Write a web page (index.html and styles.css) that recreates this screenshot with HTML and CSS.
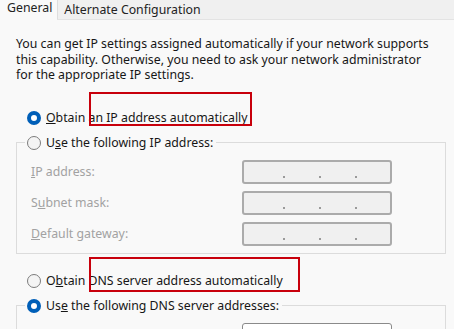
FILE: index.html
```html
<!DOCTYPE html>
<html lang="en">
<head>
    <meta charset="UTF-8">
    <meta name="viewport" content="width=device-width, initial-scale=1.0">
    <title>Internet Protocol Version 4 (TCP/IPv4) Properties</title>
    <link rel="stylesheet" href="styles.css">
</head>
<body>

    <div class="window">
        <!-- Zakladki -->
        <div class="tabs">
            <div class="tab tab-active">General</div>
            <div class="tab">Alternate Configuration</div>
        </div>

        <div class="panel">
            <p class="intro">You can get IP settings assigned automatically if your network supports<br>this capability. Otherwise, you need to ask your network administrator<br>for the appropriate IP settings.</p>

            <div class="radio-row">
                <span class="radio radio-on"></span>
                <span><u>O</u>btain an IP address automatically</span>
            </div>

            <fieldset class="group">
                <legend>
                    <span class="radio-row">
                        <span class="radio"></span>
                        <span>U<u>s</u>e the following IP address:</span>
                    </span>
                </legend>
                <div class="field-row">
                    <span class="field-label"><u>I</u>P address:</span>
                    <div class="ip-box"><span class="dot"></span><span class="dot"></span><span class="dot"></span></div>
                </div>
                <div class="field-row">
                    <span class="field-label">S<u>u</u>bnet mask:</span>
                    <div class="ip-box"><span class="dot"></span><span class="dot"></span><span class="dot"></span></div>
                </div>
                <div class="field-row">
                    <span class="field-label"><u>D</u>efault gateway:</span>
                    <div class="ip-box"><span class="dot"></span><span class="dot"></span><span class="dot"></span></div>
                </div>
            </fieldset>

            <div class="radio-row radio-row-dns">
                <span class="radio"></span>
                <span>O<u>b</u>tain DNS server address automatically</span>
            </div>

            <fieldset class="group">
                <legend>
                    <span class="radio-row">
                        <span class="radio radio-on"></span>
                        <span>Us<u>e</u> the following DNS server addresses:</span>
                    </span>
                </legend>
                <div class="field-row">
                    <span class="field-label field-label-on"><u>P</u>referred DNS server:</span>
                    <div class="ip-box ip-box-on"><span class="dot"></span><span class="dot"></span><span class="dot"></span></div>
                </div>
            </fieldset>
        </div>

        <!-- Czerwone ramki (adnotacje) -->
        <div class="mark mark-ip"></div>
        <div class="mark mark-dns"></div>
    </div>

</body>
</html>
```

FILE: styles.css
```css
body {
    margin: 0;
    background-color: #ffffff;
    font-family: "Noto Sans", "Open Sans", sans-serif;
    font-size: 12.3px;
    color: #161616;
}

.window {
    position: relative;
    height: 329px;
    overflow: hidden;
    background-color: #f9f9f9;
}

/* Zakladki */
.tabs {
    display: flex;
    height: 19px;
    background-color: #f0f0f0;
    border-bottom: 1px solid #e3e3e3;
}

.tab {
    padding: 1px 4px 0 6px;
    line-height: 17px;
    border-left: 1px solid #dedede;
    color: #222;
}

.tab-active {
    height: 20px;
    padding: 0 5px 0 7px;
    line-height: 15px;
    border-left: none;
    background-color: #f9f9f9;
}

.panel {
    padding: 0 8px 0 16px;
}

.intro {
    margin: 16px 0 0 0;
    line-height: 15.5px;
    white-space: nowrap;
}

.radio-row {
    display: flex;
    align-items: center;
    gap: 5px;
    height: 16px;
    line-height: 16px;
    white-space: nowrap;
}

.panel > .radio-row {
    margin-top: 27px;
    padding-left: 11px;
}

.panel > .radio-row-dns {
    margin-top: 19px;
}

.radio {
    box-sizing: border-box;
    width: 14px;
    height: 14px;
    border: 1px solid #7c7c7c;
    border-radius: 50%;
    background-color: #f4f4f4;
    flex: none;
}

.radio-on {
    border: 4px solid #005fb8;
    background-color: #ffffff;
}

/* Ramka grupy */
.group {
    margin: 9px 0 0 0;
    padding: 9px 0 7px 14px;
    border: 1px solid #dcdcdc;
    display: flex;
    flex-direction: column;
    gap: 7px;
}

.group legend {
    margin-left: -6px;
    padding: 0 3px 0 2px;
}

.field-row {
    display: grid;
    grid-template-columns: 211px 150px;
    align-items: center;
}

.field-label {
    color: #a2a2a2;
    white-space: nowrap;
}

.field-label-on {
    color: #161616;
}

.ip-box {
    box-sizing: border-box;
    height: 24px;
    display: flex;
    gap: 34px;
    padding: 14px 0 0 39px;
    border: 2px solid #ababab;
    border-radius: 3px;
    background-color: #f0f0f0;
}

.ip-box-on {
    border: 1px solid #8a8a8a;
    background-color: #ffffff;
}

.dot {
    width: 2px;
    height: 2px;
    background-color: #9a9a9a;
}

/* Adnotacje */
.mark {
    position: absolute;
    border: 2px solid #c8000c;
}

.mark-ip {
    left: 89px;
    top: 92px;
    width: 159px;
    height: 30px;
}

.mark-dns {
    left: 89px;
    top: 257px;
    width: 207px;
    height: 31px;
}
```
